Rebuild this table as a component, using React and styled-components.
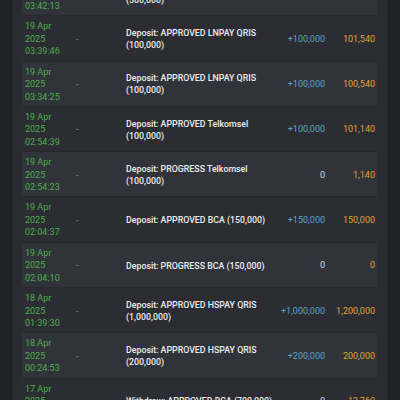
import React from 'react';
import styled, { createGlobalStyle } from 'styled-components';

const Global = createGlobalStyle`
    html, body {
        margin: 0;
        padding: 0;
        background: #1f2125;
        overflow: hidden;
    }
    body {
        font-family: Roboto, "Liberation Sans", sans-serif;
    }
`;

const Page = styled.div`
    width: 400px;
    height: 400px;
    overflow: hidden;
    display: flex;
    background: #1f2125;
`;

const Panel = styled.div`
    margin-left: 12px;
    width: 376px;
    height: 100%;
    background: #2a2c31;
    border-left: 1px solid #24262a;
    border-right: 1px solid #24262a;
    box-sizing: border-box;
    padding: 0 10px 0 9px;
    overflow: hidden;
`;

const List = styled.div`
    margin-top: -30px;
    display: flex;
    flex-direction: column;
`;

const Row = styled.div`
    display: grid;
    grid-template-columns: 51px 50px 152px 53px 48px;
    align-items: center;
    height: 45.3px;
    box-sizing: border-box;
    padding: 4px 0;
    background: ${(props) => (props.$odd ? '#2b2d33' : '#31333a')};
    border-top: 1px solid #26282c;
    font-size: 9px;
    line-height: 12.5px;
`;

const DateCell = styled.div`
    padding: 0 3px;
    color: #4dae4a;
`;

const Dash = styled.div`
    padding: 0 3px;
    color: #8a8d94;
`;

const Desc = styled.div`
    padding: 0 0 0 3px;
    color: #ececee;
    font-weight: 500;
    font-size: 8.8px;
    line-height: 12px;
`;

const Amount = styled.div`
    padding: 0 3px;
    text-align: right;
    white-space: nowrap;
    color: ${(props) => (props.$zero ? '#d6d7da' : '#5aa6c2')};
`;

const Balance = styled.div`
    padding: 0 1px 0 3px;
    text-align: right;
    white-space: nowrap;
    color: #e2a033;
`;

const rows = [
    { d: '19 Apr', y: '2025', t: '03:42:13', desc: 'Deposit: APPROVED LNPAY QRIS (500,000)', amt: '+500,000', bal: '501,540' },
    { d: '19 Apr', y: '2025', t: '03:39:46', desc: 'Deposit: APPROVED LNPAY QRIS (100,000)', amt: '+100,000', bal: '101,540' },
    { d: '19 Apr', y: '2025', t: '03:34:25', desc: 'Deposit: APPROVED LNPAY QRIS (100,000)', amt: '+100,000', bal: '100,540' },
    { d: '19 Apr', y: '2025', t: '02:54:39', desc: 'Deposit: APPROVED Telkomsel (100,000)', amt: '+100,000', bal: '101,140' },
    { d: '19 Apr', y: '2025', t: '02:54:23', desc: 'Deposit: PROGRESS Telkomsel (100,000)', amt: '0', bal: '1,140' },
    { d: '19 Apr', y: '2025', t: '02:04:37', desc: 'Deposit: APPROVED BCA (150,000)', amt: '+150,000', bal: '150,000' },
    { d: '19 Apr', y: '2025', t: '02:04:10', desc: 'Deposit: PROGRESS BCA (150,000)', amt: '0', bal: '0' },
    { d: '18 Apr', y: '2025', t: '01:39:30', desc: 'Deposit: APPROVED HSPAY QRIS (1,000,000)', amt: '+1,000,000', bal: '1,200,000' },
    { d: '18 Apr', y: '2025', t: '00:24:53', desc: 'Deposit: APPROVED HSPAY QRIS (200,000)', amt: '+200,000', bal: '200,000' },
    { d: '17 Apr', y: '2025', t: '23:10:05', desc: 'Withdraw: APPROVED BCA (700,000)', amt: '0', bal: '13,760' },
];

const App = () => (
    <Page>
        <Global />
        <Panel>
            <List>
                {rows.map((r, i) => (
                    <Row key={i} $odd={i % 2 === 1}>
                        <DateCell>{r.d}<br />{r.y}<br />{r.t}</DateCell>
                        <Dash>-</Dash>
                        <Desc>{r.desc}</Desc>
                        <Amount $zero={r.amt === '0'}>{r.amt}</Amount>
                        <Balance>{r.bal}</Balance>
                    </Row>
                ))}
            </List>
        </Panel>
    </Page>
);

export default App;
